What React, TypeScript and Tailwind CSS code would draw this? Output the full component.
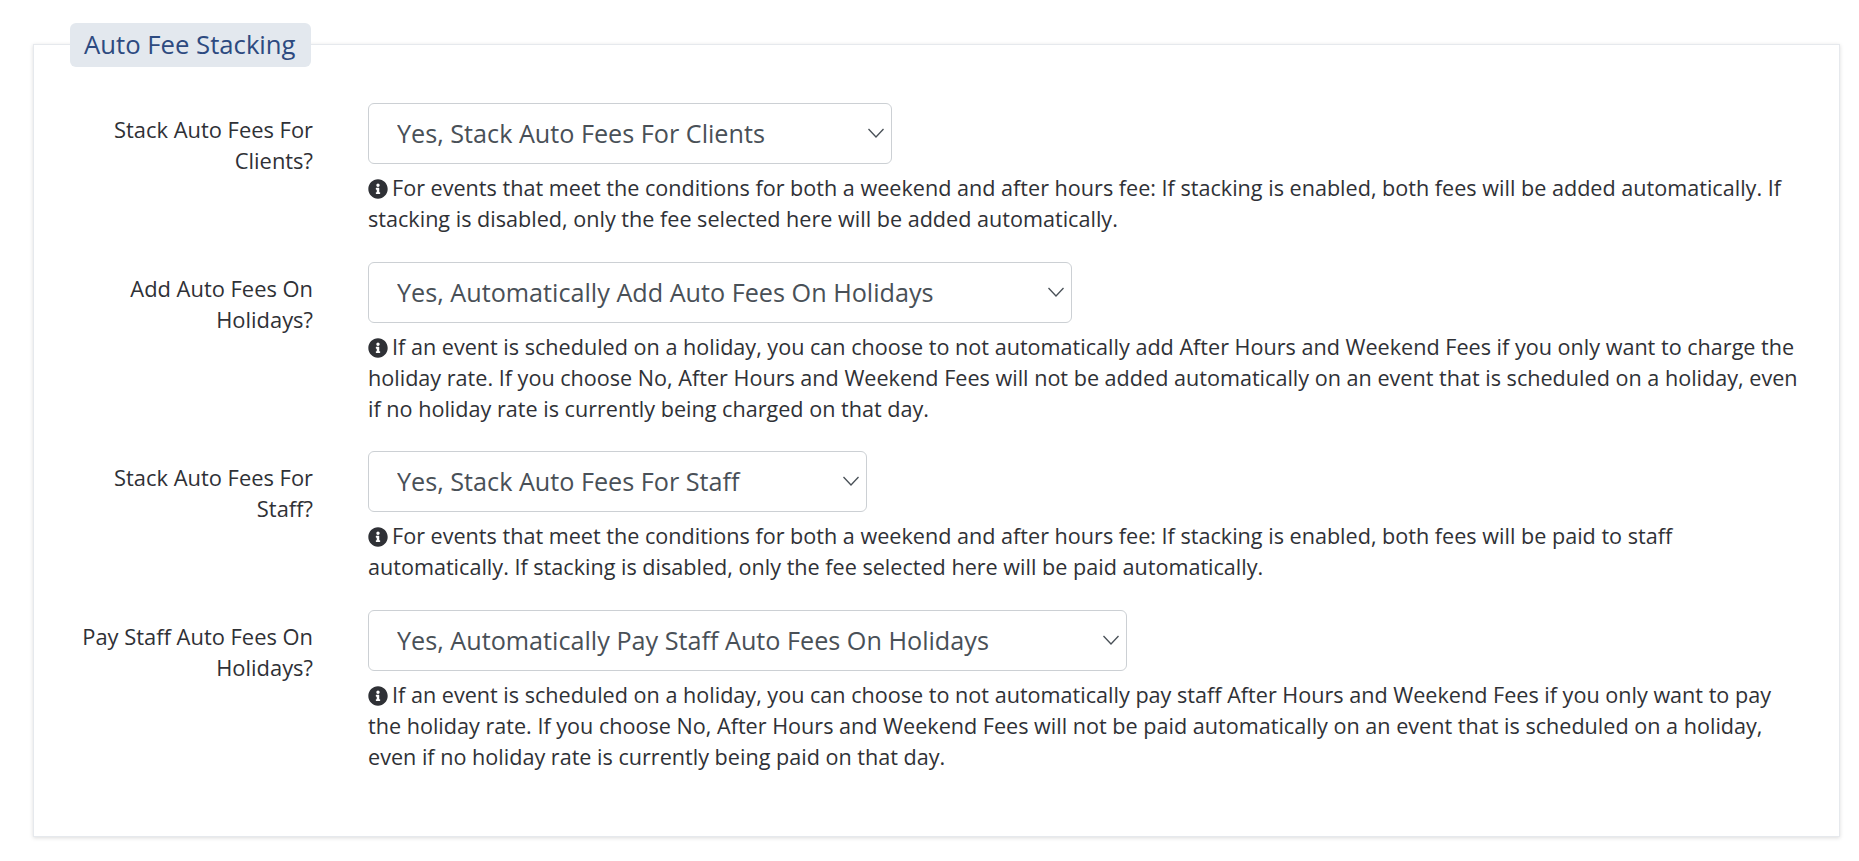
import { FaInfoCircle } from "react-icons/fa";

const ROWS = [
  {
    label: "Stack Auto Fees For Clients?",
    value: "Yes, Stack Auto Fees For Clients",
    width: "w-[524px]",
    help: "For events that meet the conditions for both a weekend and after hours fee: If stacking is enabled, both fees will be added automatically. If stacking is disabled, only the fee selected here will be added automatically.",
  },
  {
    label: "Add Auto Fees On Holidays?",
    value: "Yes, Automatically Add Auto Fees On Holidays",
    width: "w-[704px]",
    help: "If an event is scheduled on a holiday, you can choose to not automatically add After Hours and Weekend Fees if you only want to charge the holiday rate. If you choose No, After Hours and Weekend Fees will not be added automatically on an event that is scheduled on a holiday, even if no holiday rate is currently being charged on that day.",
  },
  {
    label: "Stack Auto Fees For Staff?",
    value: "Yes, Stack Auto Fees For Staff",
    width: "w-[499px]",
    help: "For events that meet the conditions for both a weekend and after hours fee: If stacking is enabled, both fees will be paid to staff automatically. If stacking is disabled, only the fee selected here will be paid automatically.",
  },
  {
    label: "Pay Staff Auto Fees On Holidays?",
    value: "Yes, Automatically Pay Staff Auto Fees On Holidays",
    width: "w-[759px]",
    help: "If an event is scheduled on a holiday, you can choose to not automatically pay staff After Hours and Weekend Fees if you only want to pay the holiday rate. If you choose No, After Hours and Weekend Fees will not be paid automatically on an event that is scheduled on a holiday, even if no holiday rate is currently being paid on that day.",
  },
];

function FeeRow({ row }: { row: (typeof ROWS)[number] }) {
  return (
    <div className="flex">
      <label className="w-[279px] shrink-0 pl-[39px] pt-[11px] text-right text-[21.9px]">{row.label}</label>
      <div className="ml-[55px] w-[1441px] shrink-0">
        <div className={`relative h-[61px] ${row.width}`}>
          <select
            defaultValue={row.value}
            className="h-full w-full appearance-none rounded-[6px] border border-[#ccd0d4] bg-white pl-[28px] text-[25.2px] text-[#495057] outline-none"
          >
            <option>{row.value}</option>
          </select>
          <svg
            className="pointer-events-none absolute right-[6px] top-[22px] h-[16px] w-[20px] text-[#495057]"
            viewBox="0 0 20 16"
            fill="none"
            stroke="currentColor"
            strokeWidth="1.3"
          >
            <path d="M2.5 4l7.5 8 7.5-8" />
          </svg>
        </div>
        <p className="mt-[8px]">
          <FaInfoCircle className="mr-[4px] inline-block h-[20px] w-[20px] align-[-3px]" />
          {row.help}
        </p>
      </div>
    </div>
  );
}

export default function App() {
  return (
    <div className="h-[861px] overflow-hidden bg-white pl-[33px] pt-[44px] font-['Open_Sans',sans-serif] text-[21.6px] leading-[31px] text-[#2f3136]">
      <fieldset className="relative flex h-[793px] w-[1807px] flex-col gap-[27.5px] border border-[#e6e9ed] pt-[58px] shadow-[0_1px_4px_rgba(0,0,0,0.14)]">
        <legend className="absolute left-[36px] top-[-22px] h-[44px] w-[241px] rounded-[6px] bg-[#e3e8ee] pl-[14px] text-left text-[25.7px] leading-[44px] text-[#2d4a80]">
          Auto Fee Stacking
        </legend>
        {ROWS.map((r) => (
          <FeeRow key={r.label} row={r} />
        ))}
      </fieldset>
    </div>
  );
}
